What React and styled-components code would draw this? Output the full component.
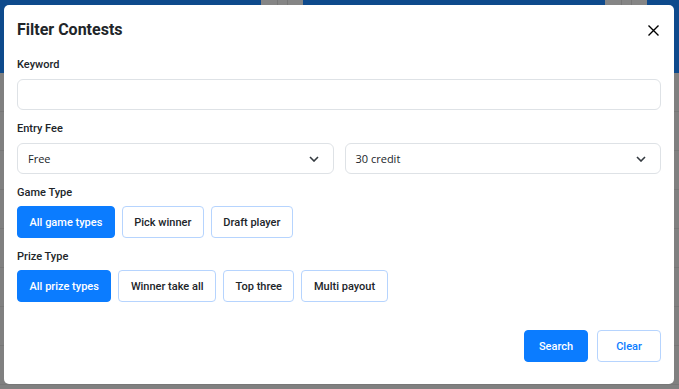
import React from "react";
import styled, { createGlobalStyle } from "styled-components";

const GlobalStyle = createGlobalStyle`
  * {
    box-sizing: border-box;
  }
  html,
  body {
    margin: 0;
    padding: 0;
  }
  body {
    font-family: Roboto, "Liberation Sans", sans-serif;
    color: #212529;
    background: #808080;
  }
`;

const Page = styled.div`
  position: relative;
  width: 679px;
  height: 389px;
  overflow: hidden;
  background: #808080;
`;

const TopBar = styled.header`
  height: 73px;
  background: #0e4a8c;
  display: flex;
  align-items: flex-start;
  padding-left: 261px;
  gap: 302px;
`;

const ToolGroup = styled.div`
  display: flex;
  height: 40px;
  width: 42px;
  background: #858585;
`;

const ToolCell = styled.span`
  flex: ${({ $grow }) => $grow};
  border-right: 1px solid #777;

  &:last-child {
    border-right: none;
  }
`;

const Row = styled.div`
  height: 39px;
  border-bottom: 1px solid #777;
`;

const Overlay = styled.div`
  position: absolute;
  inset: 0;
  padding: 5px 5px 5px 4px;
`;

const Modal = styled.div`
  width: 670px;
  height: 379px;
  background: #fff;
  border-radius: 5px;
  padding: 0 13px;
  display: flex;
  flex-direction: column;
`;

const Header = styled.div`
  display: flex;
  align-items: center;
  justify-content: space-between;
  padding-top: 15px;
  height: 52px;
  padding-bottom: 17px;
`;

const Title = styled.h2`
  margin: 0;
  font-size: 16px;
  line-height: 20px;
  font-weight: 700;
  color: #212529;
`;

const CloseButton = styled.button`
  border: none;
  background: none;
  padding: 0;
  margin-right: 2px;
  width: 12px;
  height: 12px;
  display: flex;
  align-items: center;
  justify-content: center;
  cursor: pointer;
`;

const Field = styled.div`
  display: flex;
  flex-direction: column;
  gap: ${({ $gap }) => $gap || 6}px;
  margin-top: ${({ $top }) => $top || 0}px;
`;

const Label = styled.label`
  font-size: 11px;
  line-height: 16px;
  font-weight: 500;
  color: #212529;
`;

const TextInput = styled.input`
  height: 31px;
  width: 100%;
  border: 1px solid #dee2e6;
  border-radius: 6px;
  outline: none;
  font-family: inherit;
  font-size: 11px;
  padding: 0 11px;
`;

const SelectRow = styled.div`
  display: grid;
  grid-template-columns: 1fr 1fr;
  gap: 11px;
`;

const SelectBox = styled.div`
  height: 31px;
  border: 1px solid #dee2e6;
  border-radius: 6px;
  display: flex;
  align-items: center;
  justify-content: space-between;
  padding: 0 14px 0 10px;
  font-family: "Open Sans", "Noto Sans", sans-serif;
  font-size: 11px;
  color: #212529;
`;

const ChipRow = styled.div`
  display: flex;
  gap: 7px;
`;

const Chip = styled.button`
  height: 32px;
  min-width: ${({ $min }) => $min || 0}px;
  padding: 0 11.5px;
  border-radius: 4px;
  border: 1px solid ${({ $active }) => ($active ? "#0b7cff" : "#b6d4fe")};
  background: ${({ $active }) => ($active ? "#0b7cff" : "#fff")};
  color: ${({ $active, $accent }) =>
    $active ? "#fff" : $accent ? "#0b7cff" : "#212529"};
  font-family: inherit;
  font-size: 11px;
  font-weight: 500;
  cursor: pointer;
`;

const Footer = styled.div`
  display: flex;
  justify-content: flex-end;
  gap: 9px;
  margin-top: 28px;
`;

const Chevron = () => (
  <svg width="10" height="6" viewBox="0 0 10 6" fill="none">
    <path d="M1 1l4 4 4-4" stroke="#343a40" strokeWidth="1.6" />
  </svg>
);

const gameTypes = ["All game types", "Pick winner", "Draft player"];
const prizeTypes = ["All prize types", "Winner take all", "Top three", "Multi payout"];

export default function App() {
  return (
    <>
      <GlobalStyle />
      <Page>
        <TopBar>
          <ToolGroup>
            <ToolCell $grow={17} />
            <ToolCell $grow={9} />
            <ToolCell $grow={16} />
          </ToolGroup>
          <ToolGroup>
            <ToolCell $grow={17} />
            <ToolCell $grow={9} />
            <ToolCell $grow={16} />
          </ToolGroup>
        </TopBar>
        {Array.from({ length: 8 }).map((_, i) => (
          <Row key={i} />
        ))}

        <Overlay>
          <Modal>
            <Header>
              <Title>Filter Contests</Title>
              <CloseButton aria-label="Close">
                <svg width="11" height="11" viewBox="0 0 11 11">
                  <path d="M0.5 0.5l10 10M10.5 0.5l-10 10" stroke="#000" strokeWidth="1.4" />
                </svg>
              </CloseButton>
            </Header>

            <Field>
              <Label>Keyword</Label>
              <TextInput type="text" />
            </Field>

            <Field $top={11}>
              <Label>Entry Fee</Label>
              <SelectRow>
                <SelectBox>
                  <span>Free</span>
                  <Chevron />
                </SelectBox>
                <SelectBox>
                  <span>30 credit</span>
                  <Chevron />
                </SelectBox>
              </SelectRow>
            </Field>

            <Field $top={11} $gap={5}>
              <Label>Game Type</Label>
              <ChipRow>
                {gameTypes.map((t, i) => (
                  <Chip key={t} $active={i === 0}>
                    {t}
                  </Chip>
                ))}
              </ChipRow>
            </Field>

            <Field $top={11} $gap={5}>
              <Label>Prize Type</Label>
              <ChipRow>
                {prizeTypes.map((t, i) => (
                  <Chip key={t} $active={i === 0}>
                    {t}
                  </Chip>
                ))}
              </ChipRow>
            </Field>

            <Footer>
              <Chip $active $min={64}>Search</Chip>
              <Chip $accent $min={64}>Clear</Chip>
            </Footer>
          </Modal>
        </Overlay>
      </Page>
    </>
  );
}
